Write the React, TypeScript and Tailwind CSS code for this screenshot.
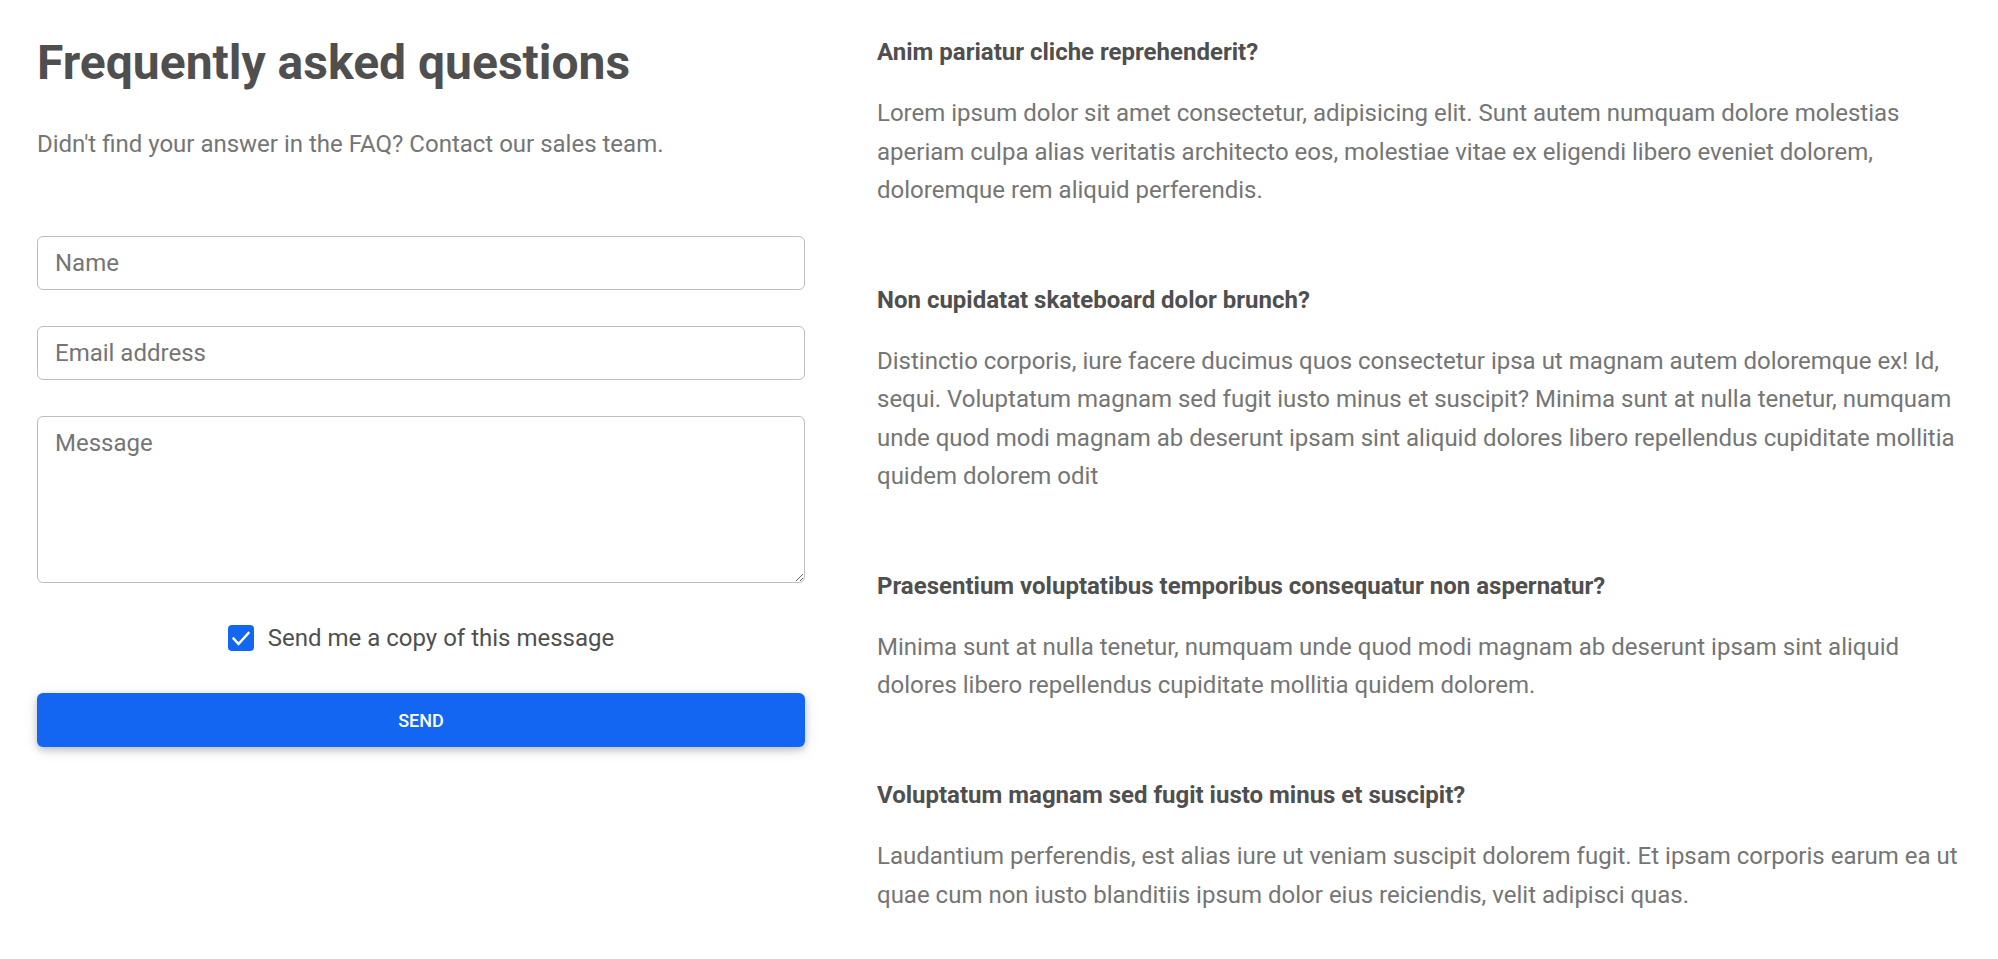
import React from "react";

const faqs = [
  {
    q: "Anim pariatur cliche reprehenderit?",
    a: "Lorem ipsum dolor sit amet consectetur, adipisicing elit. Sunt autem numquam dolore molestias aperiam culpa alias veritatis architecto eos, molestiae vitae ex eligendi libero eveniet dolorem, doloremque rem aliquid perferendis.",
  },
  {
    q: "Non cupidatat skateboard dolor brunch?",
    a: "Distinctio corporis, iure facere ducimus quos consectetur ipsa ut magnam autem doloremque ex! Id, sequi. Voluptatum magnam sed fugit iusto minus et suscipit? Minima sunt at nulla tenetur, numquam unde quod modi magnam ab deserunt ipsam sint aliquid dolores libero repellendus cupiditate mollitia quidem dolorem odit",
  },
  {
    q: "Praesentium voluptatibus temporibus consequatur non aspernatur?",
    a: "Minima sunt at nulla tenetur, numquam unde quod modi magnam ab deserunt ipsam sint aliquid dolores libero repellendus cupiditate mollitia quidem dolorem.",
  },
  {
    q: "Voluptatum magnam sed fugit iusto minus et suscipit?",
    a: "Laudantium perferendis, est alias iure ut veniam suscipit dolorem fugit. Et ipsam corporis earum ea ut quae cum non iusto blanditiis ipsum dolor eius reiciendis, velit adipisci quas.",
  },
];

export default function App() {
  return (
    <div
      className="min-h-[959px] w-full bg-white text-[#4f4f4f]"
      style={{ fontFamily: "Roboto, 'Liberation Sans', sans-serif" }}
    >
      <div className="flex items-start pl-[37px]">
        {/* Left column */}
        <div className="flex w-[768px] shrink-0 flex-col pt-[34px]">
          <h2 className="text-[48px] font-bold leading-[57.6px] text-[#4f4f4f]">
            Frequently asked questions
          </h2>
          <p className="mt-[33px] text-[24px] leading-[38.4px] text-[#757575]">
            Didn't find your answer in the FAQ? Contact our sales team.
          </p>
          <form className="mt-[73px] flex flex-col" onSubmit={(e) => e.preventDefault()}>
            <input
              type="text"
              placeholder="Name"
              className="h-[54px] w-full rounded-[6px] border border-[#bdbdbd] bg-white px-[17px] text-[24px] text-[#4f4f4f] outline-none placeholder:text-[#757575]"
            />
            <input
              type="email"
              placeholder="Email address"
              className="mt-[36px] h-[54px] w-full rounded-[6px] border border-[#bdbdbd] bg-white px-[17px] text-[24px] text-[#4f4f4f] outline-none placeholder:text-[#757575]"
            />
            <textarea
              placeholder="Message"
              rows={4}
              className="mt-[36px] h-[167px] w-full rounded-[6px] border border-[#bdbdbd] bg-white px-[17px] py-[7px] text-[24px] leading-[38.4px] text-[#4f4f4f] outline-none placeholder:text-[#757575]"
            />
            <div className="mt-[36px] flex h-[38.4px] items-center justify-center gap-[14px]">
              <span className="flex h-[26px] w-[26px] items-center justify-center rounded-[4px] bg-[#1266f1]">
                <svg width="26" height="26" viewBox="0 0 26 26" fill="none">
                  <polyline
                    points="5.5,13.5 10.5,19 20.5,8"
                    stroke="white"
                    strokeWidth="2.6"
                    strokeLinecap="round"
                    strokeLinejoin="round"
                  />
                </svg>
              </span>
              <span className="text-[24px] leading-[38.4px] text-[#4f4f4f]">
                Send me a copy of this message
              </span>
            </div>
            <button
              type="submit"
              className="mt-[36px] h-[54px] w-full rounded-[6px] bg-[#1266f1] text-[18px] font-medium uppercase text-white shadow-[0_3px_7px_0_rgba(0,0,0,0.2),0_3px_15px_0_rgba(0,0,0,0.1)]"
            >
              Send
            </button>
          </form>
        </div>

        {/* Right column */}
        <div className="ml-[72px] flex w-[1100px] shrink-0 flex-col gap-[76px] pt-[38px]">
          {faqs.map((f) => (
            <div key={f.q} className="flex flex-col">
              <h6 className="mb-[27.6px] text-[24px] font-bold leading-[28.8px] text-[#4f4f4f]">
                {f.q}
              </h6>
              <p className="text-[24px] leading-[38.4px] text-[#757575]">{f.a}</p>
            </div>
          ))}
        </div>
      </div>
    </div>
  );
}
